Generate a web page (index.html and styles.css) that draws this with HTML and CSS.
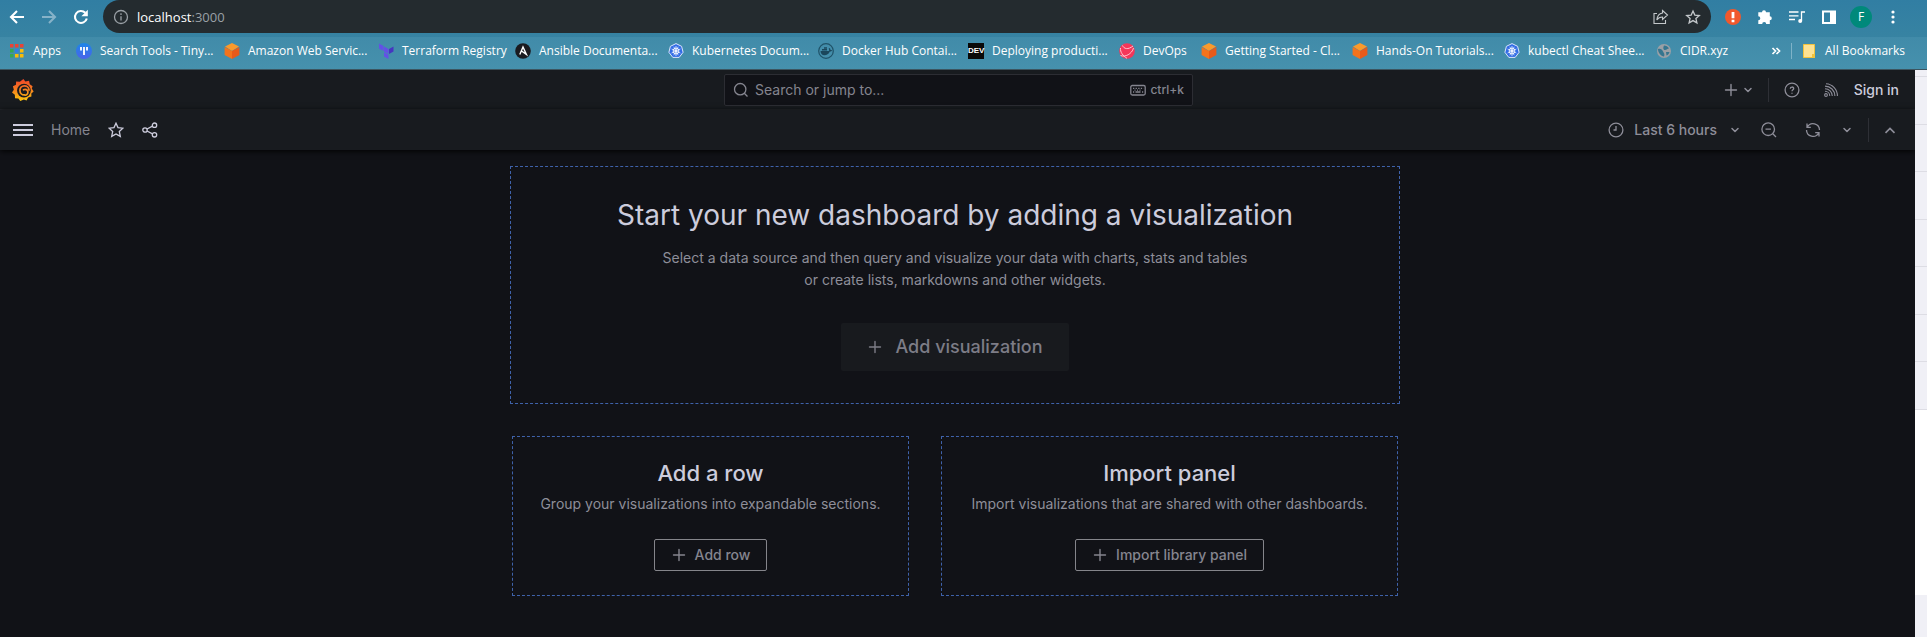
FILE: index.html
```html
<!DOCTYPE html>
<html lang="en">
<head>
<meta charset="utf-8">
<title>Home - Dashboards - Grafana</title>
<link rel="stylesheet" href="styles.css">
</head>
<body>
<svg class="defs" width="0" height="0" aria-hidden="true">
  <defs>
    <linearGradient id="flame" gradientUnits="userSpaceOnUse" x1="0" y1="0" x2="0" y2="24"><stop offset="0" stop-color="#f0452a"/><stop offset=".45" stop-color="#f47a20"/><stop offset="1" stop-color="#fcc80e"/></linearGradient>
    <linearGradient id="tiny" x1="0" y1="0" x2="0" y2="1"><stop offset="0" stop-color="#1b86e8"/><stop offset="1" stop-color="#4b63ea"/></linearGradient>
    <symbol id="cube" viewBox="0 0 16 16"><path fill="#fb9a2b" d="M8 0l7 3.6L8 8 1 3.6z"/><path fill="#f4731c" d="M.6 3.9L8 8v8L.6 12z"/><path fill="#e85a1a" d="M15.4 3.9L8 8v8l7.400-4z"/></symbol>
    <symbol id="kube" viewBox="0 0 16 16"><path fill="#326ce5" stroke="#dbe6fb" d="M8 .6l5.600 2.700 1.500 6-3.900 5.100H4.800L.9 9.300l1.500-6z"/><circle cx="8" cy="8" r="2.900" fill="none" stroke="#fff" stroke-width=".9"/><path stroke="#fff" stroke-width=".7" d="M8 3v10M3.600 6l8.800 4M12.400 6l-8.800 4M5.800 3.800l4.400 8.400M10.200 3.800l-4.400 8.400"/></symbol>
    <symbol id="plus" viewBox="0 0 16 16"><path fill="none" stroke="currentColor" stroke-width="1.400" stroke-linecap="round" d="M8 2.500v11M2.500 8h11"/></symbol>
    <symbol id="down" viewBox="0 0 16 16"><path fill="none" stroke="currentColor" stroke-width="1.500" stroke-linecap="round" stroke-linejoin="round" d="M5 6.500l3 3 3-3"/></symbol>
  </defs>
</svg>

<div class="toolbar">
  <button class="tool" aria-label="Back"><svg viewBox="0 0 16 16"><path class="line thick" d="M15 8H2M8 2L2 8l6 6"/></svg></button>
  <button class="tool dim" aria-label="Forward"><svg viewBox="0 0 16 16"><path class="line thick" d="M1 8h13M8 2l6 6-6 6"/></svg></button>
  <button class="tool" aria-label="Reload"><svg viewBox="0 0 16 16"><path class="line thick" d="M13.800 9.500A6 6 0 1 1 12.300 3.800"/><path fill="currentColor" d="M14.800.8v6.400H8.400z"/></svg></button>
  <div class="address">
    <svg class="i16 muted" viewBox="0 0 16 16"><circle class="line" cx="8" cy="8" r="6.500"/><path class="line" d="M8 7.200v4.300M8 4.300v1.600"/></svg>
    <span class="url">localhost<span class="port">:3000</span></span>
    <button aria-label="Share this page"><svg class="i16" viewBox="0 0 16 16"><path class="line thin" d="M4 4.500H1v10h11.500V11M9.500 1.500l5 4.500-5 4.500V8C7 8 5 9 3.800 11 4.200 7 6.500 4.500 9.500 4z"/></svg></button>
    <button aria-label="Bookmark this tab"><svg class="i16" viewBox="0 0 16 16"><path class="line" d="M8 2l1.800 4.100 4.500.4-3.400 3 1 4.400L8 11.600l-3.900 2.300 1-4.400-3.400-3 4.500-.4z"/></svg></button>
  </div>
  <div class="extensions">
    <button class="tool" aria-label="Alert extension"><svg viewBox="0 0 16 16"><circle cx="8" cy="8" r="8" fill="#f1582c"/><path stroke="#fff" stroke-width="2.800" d="M8 3v6.200M8 10.800v2.400"/></svg></button>
    <button class="tool" aria-label="Extensions"><svg viewBox="0 0 16 16"><path fill="currentColor" d="M5 3.200a2 2 0 0 1 4 0h3.800v4a2 2 0 0 1 0 4V15H9.200a2 2 0 0 0-4 0H1.300v-3.800a2 2 0 0 0 0-4v-4z"/></svg></button>
    <button class="tool" aria-label="Media control"><svg viewBox="0 0 16 16"><path class="line" stroke-width="2" d="M0 3h9.500M0 6.800h9.500M0 10.500h6M12.500 12V3H16"/><circle cx="11.200" cy="12" r="2" fill="currentColor"/></svg></button>
    <button class="tool" aria-label="Side panel"><svg viewBox="0 0 16 16"><path fill="currentColor" fill-rule="evenodd" d="M1 1.500h14v13.500H1zM3 3.500v9.500h6V3.500z"/></svg></button>
    <button class="profile" aria-label="Profile">F</button>
    <button class="tool" aria-label="Menu"><svg viewBox="0 0 16 16"><circle cx="8" cy="3" r="1.600" fill="currentColor"/><circle cx="8" cy="8" r="1.600" fill="currentColor"/><circle cx="8" cy="13" r="1.600" fill="currentColor"/></svg></button>
  </div>
</div>

<nav class="bookmarks" aria-label="Bookmarks">
  <div class="bookmark-list">
    <a href="#"><svg class="i16" viewBox="0 0 16 16"><path fill="#ea4335" d="M1 1h3.500v3.500H1zM6 1h3.500v3.500H6zM11 1h3.500v3.500H11z"/><path fill="#34a853" d="M1 6h3.500v3.500H1zM1 11h3.500v3.500H1z"/><path fill="#2f7de9" d="M6 6h3.500v3.500H6z"/><path fill="#fbbc05" d="M11 6h3.500v3.500H11zM6 11h3.500v3.500H6zM11 11h3.500v3.500H11z"/></svg>Apps</a>
    <a href="#"><svg class="i16" viewBox="0 0 16 16"><circle cx="8" cy="8" r="8" fill="url(#tiny)"/><path stroke="#fff" stroke-width="1.800" d="M5 4v3.500M8 4v8M11 4v3.500"/></svg>Search Tools - Tiny...</a>
    <a href="#"><svg class="i16"><use href="#cube"/></svg>Amazon Web Servic...</a>
    <a href="#"><svg class="i16" viewBox="0 0 16 16"><path fill="#6350e6" d="M1 .5l4.500 2.600v5L1 5.500zM6 3.400l4.500 2.600v5L6 8.500zM6 9.200l4.500 2.500v4.300L6 13.500z"/><path fill="#4636c0" d="M15.500 3.400L11 6v5l4.500-2.500z"/></svg>Terraform Registry</a>
    <a href="#"><svg class="i16" viewBox="0 0 16 16"><circle cx="8" cy="8" r="7.800" fill="#1a1a1f"/><path fill="none" stroke="#fff" stroke-width="1.400" d="M4.800 11.500L8 4l3.400 7.400L6.500 8"/></svg>Ansible Documenta...</a>
    <a href="#"><svg class="i16"><use href="#kube"/></svg>Kubernetes Docum...</a>
    <a href="#"><svg class="i16" viewBox="0 0 16 16"><circle cx="8" cy="8" r="7.300" fill="none" stroke="#1f5268" stroke-width="1.200"/><path fill="#1b475c" d="M2.500 8h8.600c.2-1 0-1.800-.4-2.400l.8-.6c.8.5 1 1.300 1 2 .7-.1 1.300 0 1.600.3-.4 1-1.300 1.400-2.300 1.300-1 2.500-3 3.700-5.500 3.700C4 12.300 2.600 10.500 2.500 8zM4 6h5v1.600H4zM6 4.200h3v1.500H6z"/></svg>Docker Hub Contai...</a>
    <a href="#"><span class="dev">DEV</span>Deploying producti...</a>
    <a href="#"><svg class="i16" viewBox="0 0 16 16"><circle cx="8" cy="8" r="7.800" fill="#f4365a"/><path fill="none" stroke="#ffc4d0" stroke-width="1" d="M1.500 12.500C6 14.500 13 11 14.500 5M3.500 2.500C5 6 9 7 14 3M1.500 5C1 9 4 13 8 15.300"/></svg>DevOps</a>
    <a href="#"><svg class="i16"><use href="#cube"/></svg>Getting Started - Cl...</a>
    <a href="#"><svg class="i16"><use href="#cube"/></svg>Hands-On Tutorials...</a>
    <a href="#"><svg class="i16"><use href="#kube"/></svg>kubectl Cheat Shee...</a>
    <a href="#"><svg class="i16" viewBox="0 0 16 16"><circle cx="8" cy="8" r="7" fill="#9aa0a6"/><path fill="#35758f" d="M2 6c3-.5 4 .5 5 2.500S9 11 8 13.500C5 13 2 10 2 6zM8 2.500c2 0 4 1 5 3-2 0-2 1.500-4 1.500S7 4.500 8 2.500zM10 9h3.500c-.5 2-1.500 3-3 3.500z"/></svg>CIDR.xyz</a>
  </div>
  <button class="more" aria-label="More bookmarks"><svg viewBox="0 0 10 10"><path class="line heavy" d="M1.500 2l3 3-3 3M5.500 2l3 3-3 3"/></svg></button>
  <a class="all" href="#"><svg class="i16" viewBox="0 0 16 16"><path fill="#fde293" stroke="#f3c33c" d="M2.500 1.500h11v13h-11z"/><path fill="#f3c33c" d="M11 11h3v4h-3z"/></svg>All Bookmarks</a>
</nav>

<div class="viewport">
  <div class="app">
    <header class="top">
      <a class="logo" href="#" aria-label="Grafana"><svg viewBox="0 0 24 24"><path fill="url(#flame)" d="M12.400 0l2.200 2.600 4-.7.800 3.700 3.100 2.200-.9 2.600 2 3.200-2.500 2.200.1 3.400-3.600.9-1.700 3.400-3-1.200L9 24l-2-2.800-3.700-.2-.2-3.700L0 14.600l2-3-1-3.800 3.300-1.500.2-3.700 4.100.4z"/><circle cx="13" cy="12.600" r="7.500" fill="#181b1f"/><path fill="none" stroke="url(#flame)" stroke-width="1.900" stroke-linecap="round" d="M18.600 12A5 5 0 1 0 13.500 17.400A3.100 3.100 0 1 0 12.600 11.800"/></svg></a>
      <button class="search"><svg class="i16" viewBox="0 0 16 16"><circle class="line" cx="7.200" cy="7.200" r="5.700"/><path class="line" d="M11.300 11.300l3.200 3.200"/></svg><span class="prompt">Search or jump to...</span><svg class="i16" viewBox="0 0 16 16"><rect class="line" x=".8" y="3.500" width="14.400" height="9.500" rx="1.500"/><path class="line" stroke-dasharray="1.300 1.300" d="M3 6.300h10.500"/><path class="line" d="M3 10h1.200M5.500 10h5M12 10h1.200M4.500 8.200h1M7 8.200h1M9.500 8.200h1"/></svg><span class="keys">ctrl+k</span></button>
      <div class="actions">
        <button class="new" aria-label="New"><svg class="i16"><use href="#plus"/></svg><svg class="i16"><use href="#down"/></svg></button>
        <span class="rule"></span>
        <button class="help" aria-label="Help"><svg class="i16" viewBox="0 0 16 16"><circle class="line" cx="8" cy="8" r="6.900"/><path class="line" d="M6.300 6.700c0-2.200 3.400-2.200 3.400-.2C9.700 7.800 8 7.700 8 9.200M8 10.800v1"/></svg></button>
        <button class="news" aria-label="News"><svg class="i16" viewBox="0 0 16 16"><circle class="line thin" cx="3" cy="13" r="1.400"/><path class="line thin" d="M2 9.300A4.800 4.800 0 0 1 6.800 14M2 6.700A7.300 7.300 0 0 1 9.300 14M2 4.100A9.900 9.900 0 0 1 11.900 14M3 1.700A12 12 0 0 1 14.400 14"/></svg></button>
        <a class="signin" href="#">Sign in</a>
      </div>
    </header>
    <div class="subnav">
      <button class="burger" aria-label="Open menu"><svg viewBox="0 0 20 12"><path stroke="currentColor" stroke-width="2" d="M0 1h20M0 6h20M0 11h20"/></svg></button>
      <a class="crumb" href="#">Home</a>
      <button class="bright" aria-label="Mark as favorite"><svg class="i16" viewBox="0 0 16 16"><path class="line" d="M8 1.200l2 4.400 4.900.6-3.600 3.300 1 4.900L8 12l-4.300 2.400 1-4.900L1.100 6.200l4.900-.6z"/></svg></button>
      <button class="bright share" aria-label="Share dashboard"><svg class="i16" viewBox="0 0 16 16"><circle class="line" cx="3" cy="8" r="2.200"/><circle class="line" cx="12.500" cy="3.200" r="2.200"/><circle class="line" cx="12.500" cy="12.800" r="2.200"/><path class="line" d="M5 7l5.500-2.800M5 9l5.500 2.800"/></svg></button>
      <div class="time">
        <button class="range"><svg class="i16" viewBox="0 0 16 16"><circle class="line" cx="8" cy="8" r="6.900"/><path class="line" d="M8 4v4H5.500"/></svg>Last 6 hours<svg class="i16 caret"><use href="#down"/></svg></button>
        <button aria-label="Zoom out"><svg class="i16" viewBox="0 0 16 16"><circle class="line" cx="7.200" cy="7.200" r="6.300"/><path class="line" d="M11.800 11.800l3.200 3.200M4.500 7.200h5.400"/></svg></button>
        <button class="refresh" aria-label="Refresh"><svg class="i16" viewBox="0 0 16 16"><path class="line" d="M2 1.500v3.800h3.800M2.300 5A6.500 6.500 0 0 1 14.500 8M14 14.500v-3.800h-3.800M13.700 11A6.500 6.500 0 0 1 1.500 8"/></svg></button>
        <button aria-label="Refresh interval"><svg class="i16"><use href="#down"/></svg></button>
        <span class="rule"></span>
        <button class="fold" aria-label="Collapse toolbar"><svg class="i16" viewBox="0 0 16 16"><path class="line heavy" d="M3.500 10.800L8 6.500l4.500 4.300"/></svg></button>
      </div>
    </div>
    <main>
      <div class="cards">
        <section class="card hero">
          <h1>Start your new dashboard by adding a visualization</h1>
          <p>Select a data source and then query and visualize your data with charts, stats and tables<br>or create lists, markdowns and other widgets.</p>
          <button class="primary"><svg class="i16"><use href="#plus"/></svg>Add visualization</button>
        </section>
        <div class="pair">
          <section class="card small">
            <h2>Add a row</h2>
            <p>Group your visualizations into expandable sections.</p>
            <button class="outline"><svg class="i16"><use href="#plus"/></svg>Add row</button>
          </section>
          <section class="card small">
            <h2>Import panel</h2>
            <p>Import visualizations that are shared with other dashboards.</p>
            <button class="outline"><svg class="i16"><use href="#plus"/></svg>Import library panel</button>
          </section>
        </div>
      </div>
    </main>
  </div>
  <aside class="edge" aria-hidden="true"><i class="first"></i><i></i><i></i><i></i><i></i><i></i><i></i><i></i><b></b></aside>
</div>
</body>
</html>
```
FILE: styles.css
```css
* { box-sizing: border-box; }
body {
  margin: 0;
  min-height: 100vh;
  display: flex;
  flex-direction: column;
  background: #111217;
  color: #ccccdc;
  font: 14px/22px Inter, "Liberation Sans", sans-serif;
}
h1, h2, p { margin: 0; font-weight: 500; }
p { font-weight: 400; }
a { color: inherit; text-decoration: none; }
button {
  display: flex;
  align-items: center;
  justify-content: center;
  margin: 0;
  padding: 0;
  border: 0;
  background: none;
  color: inherit;
  font: inherit;
}
svg { display: block; flex: none; }
.defs { position: absolute; }
.i16 { width: 16px; height: 16px; }
.line {
  fill: none;
  stroke: currentColor;
  stroke-width: 1.3;
}
.thick { stroke-width: 2.1; }
.heavy { stroke-width: 1.7; }
.thin { stroke-width: 1.1; }

/* Browser toolbar */
.toolbar {
  height: 37px;
  padding: 0 26px 4px 9px;
  display: flex;
  align-items: center;
  background: linear-gradient(#317ea3, #3783a2);
  color: #fff;
  font-family: "Open Sans", "Noto Sans", sans-serif;
}
.tool { width: 16px; height: 16px; }
.toolbar > .tool { margin-right: 16px; }
.toolbar > .tool:nth-child(3) { margin-right: 14px; }
.tool svg { width: 16px; height: 16px; }
.dim { color: #86b2c8; }
.address {
  flex: 1;
  align-self: stretch;
  margin-right: 14px;
  padding: 0 10px;
  display: flex;
  align-items: center;
  gap: 8px;
  border-radius: 17px;
  background: #242b2f;
  color: #c3c7ca;
}
.address .muted { color: #9aa0a6; }
.address button + button { margin-left: 8px; }
.url { flex: 1; color: #fff; font-size: 13px; line-height: 20px; }
.port { color: #9aa0a6; }
.extensions { display: flex; align-items: center; gap: 16px; }
.profile {
  width: 22px;
  height: 22px;
  border-radius: 50%;
  margin: 0 -3px;
  background: #00897b;
  font-size: 12px;
}

/* Bookmarks bar */
.bookmarks {
  height: 33px;
  padding: 0 22px 4px 9px;
  display: flex;
  align-items: center;
  background: linear-gradient(#418ba9, #4691ad);
  border-bottom: 1px solid #3c5560;
  color: #fff;
  font: 12px/16px "Open Sans", "Noto Sans", sans-serif;
  white-space: nowrap;
}
.bookmark-list {
  flex: 1;
  display: grid;
  grid-template-columns: 67px 148px 154px 137px 153px 150px 150px 151px 82px 151px 152px 152px auto;
}
.bookmark-list a, .all { display: flex; align-items: center; gap: 8px; }
.dev {
  width: 16px;
  height: 16px;
  background: #0a0a0a;
  font: 700 8px/16px "Liberation Sans", sans-serif;
  text-align: center;
}
.more { width: 10px; margin-right: 10px; }
.more svg { width: 10px; height: 10px; }
.all { padding-left: 9px; border-left: 1px solid #7fb3c8; }

/* Grafana */
.viewport { flex: 1; display: flex; }
.app { flex: 1; display: flex; flex-direction: column; overflow: hidden; }
.top {
  height: 40px;
  padding: 0 10px 0 12px;
  display: grid;
  grid-template-columns: 1fr 469px 1fr;
  align-items: center;
  background: #181b1f;
  border-bottom: 1px solid #25282d;
}
.logo svg { width: 22px; height: 24px; }
.search {
  height: 32px;
  padding: 0 8px;
  gap: 6px;
  border: 1px solid #2c2d33;
  border-radius: 2px;
  background: #111217;
  color: #85858f;
}
.prompt { flex: 1; text-align: left; }
.keys { margin-left: -2px; font-size: 12px; font-weight: 500; }
.actions {
  display: flex;
  align-items: center;
  justify-content: flex-end;
  color: #8e8e99;
}
.new { margin-right: 12px; gap: 1px; }
.rule { width: 1px; height: 24px; background: #2e3036; }
.help { margin: 0 23px 0 15px; }
.signin { margin: 0 6px 0 15px; color: #ccccdc; font-weight: 500; }
.subnav {
  position: relative;
  height: 40px;
  padding: 0 17px 0 13px;
  display: flex;
  align-items: center;
  background: #181b1f;
  box-shadow: 0 1px 6px #000;
}
.burger svg { width: 20px; height: 12px; }
.crumb { margin: 0 18px; color: #85858f; }
.bright { color: #ccccdc; }
.share { margin-left: 18px; }
.time {
  margin-left: auto;
  display: flex;
  align-items: center;
  color: #8e8e99;
}
.range { gap: 10px; margin-right: 18px; font-weight: 500; }
.refresh { margin: 0 18px 0 28px; }
.time .rule { margin: 0 13px; }
main { flex: 1; padding: 16px 5px 40px 0; }
.cards {
  width: 890px;
  max-width: 100%;
  margin: 0 auto;
  display: flex;
  flex-direction: column;
  gap: 32px;
}
.card {
  display: flex;
  flex-direction: column;
  align-items: center;
  border: 1px dashed #3f62aa;
  text-align: center;
}
.card p { color: #8e8e99; }
.hero { padding: 32px; }
.hero h1 { font-size: 28px; font-weight: 400; line-height: 32px; }
.hero p { margin: 16px 0 32px; }
.primary {
  height: 48px;
  padding: 0 26px;
  gap: 12px;
  border-radius: 2px;
  background: #181a1e;
  color: #7d7d87;
  font-size: 18px;
  font-weight: 500;
}
.pair {
  margin: 0 2px;
  display: grid;
  grid-template-columns: 397fr 457fr;
  gap: 32px;
}
.small { padding: 24px 16px; }
.small h2 { font-size: 22px; line-height: 24px; }
.small p { margin: 8px 0 24px; }
.outline {
  height: 32px;
  padding: 0 16px;
  gap: 8px;
  border: 1px solid #85858b;
  border-radius: 2px;
  color: #85858f;
  font-weight: 500;
}

/* Window behind the right edge */
.edge {
  width: 12px;
  display: flex;
  flex-direction: column;
  background: #f0f0f6;
}
.edge i { flex: none; height: 47px; border-bottom: 1px solid #dddde4; }
.edge i:nth-child(even) { height: 48px; }
.edge .first { height: 7px; }
.edge b { flex: none; height: 185px; background: #fff; }
```
